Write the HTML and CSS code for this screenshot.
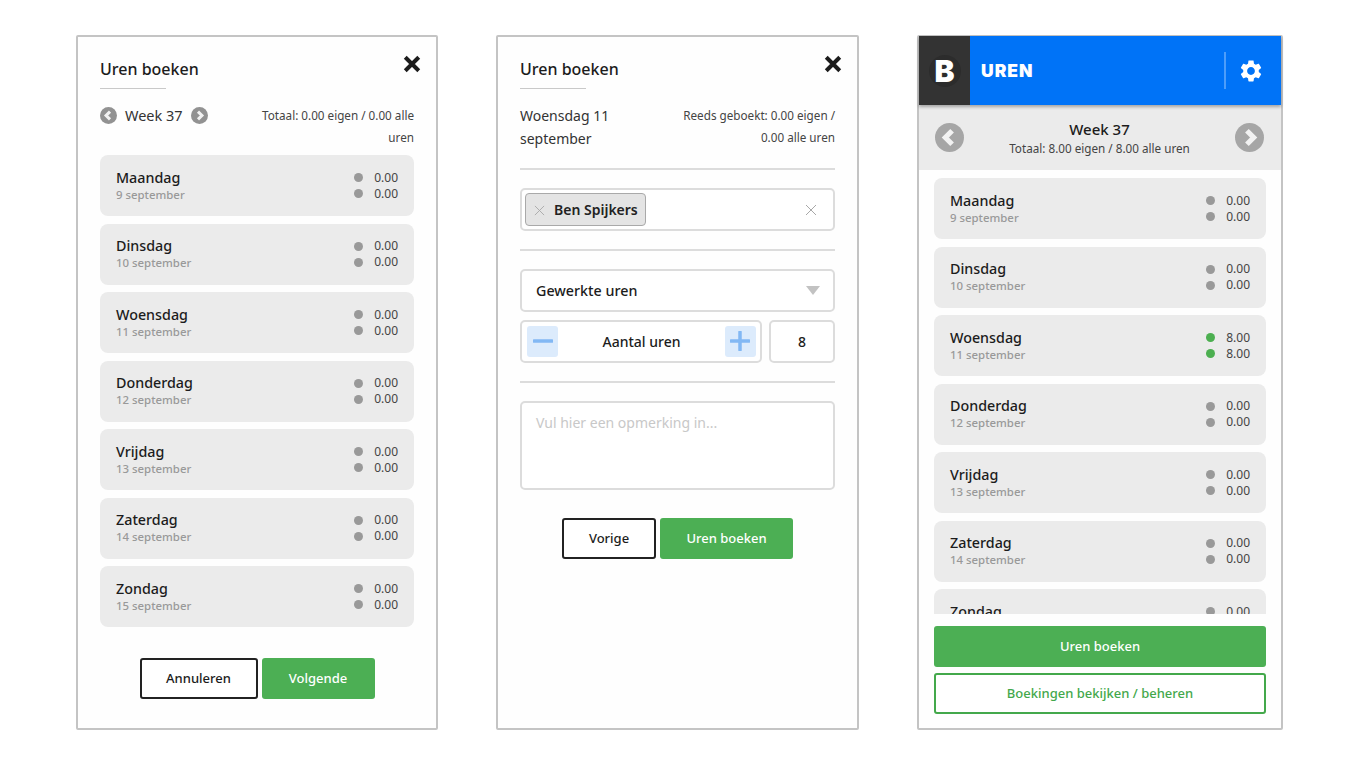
FILE: index.html
```html
<!DOCTYPE html>
<html lang="nl">
<head>
    <meta charset="UTF-8">
    <meta name="viewport" content="width=device-width, initial-scale=1.0">
    <title>Uren boeken</title>
    <link rel="stylesheet" href="styles.css">
</head>
<body>
    <svg class="defs" width="0" height="0">
        <symbol id="prev" viewBox="0 0 28 28"><circle cx="14" cy="14" r="14" fill="currentColor"/><path d="M16.5 7.5 10 14l6.5 6.5" fill="none" stroke="#f2f2f2" stroke-width="5"/></symbol>
        <symbol id="next" viewBox="0 0 28 28"><circle cx="14" cy="14" r="14" fill="currentColor"/><path d="M11.5 7.5 18 14l-6.5 6.5" fill="none" stroke="#f2f2f2" stroke-width="5"/></symbol>
        <symbol id="close" viewBox="0 0 16 16"><path d="M2 2l12 12M14 2 2 14" fill="none" stroke="#1c1c1c" stroke-width="3.6"/></symbol>
        <symbol id="thin-x" viewBox="0 0 12 12"><path d="M1 1l10 10M11 1 1 11" fill="none" stroke="#a8a8a8" stroke-width="1"/></symbol>
    </svg>

    <!-- scherm 1: week kiezen -->
    <section class="panel">
        <div class="panel-head">
            <h2>Uren boeken</h2>
            <svg class="close"><use href="#close"/></svg>
        </div>
        <div class="week-row">
            <div class="week-nav">
                <svg class="arrow-small"><use href="#prev"/></svg>
                <span>Week 37</span>
                <svg class="arrow-small"><use href="#next"/></svg>
            </div>
            <p class="totals">Totaal: 0.00 eigen / 0.00 alle uren</p>
        </div>
        <div class="days">
            <div class="day"><div class="day-text"><div class="day-name">Maandag</div><div class="day-date">9 september</div></div><div class="hours"><div><i class="dot"></i>0.00</div><div><i class="dot"></i>0.00</div></div></div>
            <div class="day"><div class="day-text"><div class="day-name">Dinsdag</div><div class="day-date">10 september</div></div><div class="hours"><div><i class="dot"></i>0.00</div><div><i class="dot"></i>0.00</div></div></div>
            <div class="day"><div class="day-text"><div class="day-name">Woensdag</div><div class="day-date">11 september</div></div><div class="hours"><div><i class="dot"></i>0.00</div><div><i class="dot"></i>0.00</div></div></div>
            <div class="day"><div class="day-text"><div class="day-name">Donderdag</div><div class="day-date">12 september</div></div><div class="hours"><div><i class="dot"></i>0.00</div><div><i class="dot"></i>0.00</div></div></div>
            <div class="day"><div class="day-text"><div class="day-name">Vrijdag</div><div class="day-date">13 september</div></div><div class="hours"><div><i class="dot"></i>0.00</div><div><i class="dot"></i>0.00</div></div></div>
            <div class="day"><div class="day-text"><div class="day-name">Zaterdag</div><div class="day-date">14 september</div></div><div class="hours"><div><i class="dot"></i>0.00</div><div><i class="dot"></i>0.00</div></div></div>
            <div class="day"><div class="day-text"><div class="day-name">Zondag</div><div class="day-date">15 september</div></div><div class="hours"><div><i class="dot"></i>0.00</div><div><i class="dot"></i>0.00</div></div></div>
        </div>
        <div class="actions actions-first">
            <button class="btn btn-outline btn-cancel">Annuleren</button>
            <button class="btn btn-green btn-next">Volgende</button>
        </div>
    </section>

    <!-- scherm 2: uren invullen -->
    <section class="panel panel-form">
        <div class="panel-head">
            <h2>Uren boeken</h2>
            <svg class="close"><use href="#close"/></svg>
        </div>
        <div class="date-row">
            <p class="date-title">Woensdag 11 september</p>
            <p class="totals">Reeds geboekt: 0.00 eigen / 0.00 alle uren</p>
        </div>
        <hr>
        <div class="field tag-field">
            <div class="tag"><svg class="thin-x"><use href="#thin-x"/></svg>Ben Spijkers</div>
            <svg class="thin-x clear"><use href="#thin-x"/></svg>
        </div>
        <hr>
        <div class="field select-field">
            <span>Gewerkte uren</span>
            <i class="caret"></i>
        </div>
        <div class="stepper-row">
            <div class="field stepper">
                <div class="step"><svg width="20" height="20" viewBox="0 0 20 20"><path d="M1 10h18" stroke="#82b8f4" stroke-width="3.5" stroke-linecap="round"/></svg></div>
                <span>Aantal uren</span>
                <div class="step"><svg width="20" height="20" viewBox="0 0 20 20"><path d="M1 10h18M10 1v18" stroke="#82b8f4" stroke-width="3.5" stroke-linecap="round"/></svg></div>
            </div>
            <div class="field amount">8</div>
        </div>
        <hr>
        <div class="field remark">Vul hier een opmerking in...</div>
        <div class="actions actions-form">
            <button class="btn btn-outline btn-back">Vorige</button>
            <button class="btn btn-green btn-book">Uren boeken</button>
        </div>
    </section>

    <!-- scherm 3: weekoverzicht in de app -->
    <section class="panel panel-app">
        <header class="app-bar">
            <div class="logo"><span>B</span></div>
            <div class="app-title">UREN</div>
            <div class="settings">
                <svg width="26" height="26" viewBox="0 0 24 24"><path fill="#fff" d="M19.14 12.94c.04-.3.06-.61.06-.94 0-.32-.02-.64-.07-.94l2.03-1.58c.18-.14.23-.41.12-.61l-1.92-3.32c-.12-.22-.37-.29-.59-.22l-2.39.96c-.5-.38-1.03-.7-1.62-.94l-.36-2.54c-.04-.24-.24-.41-.48-.41h-3.84c-.24 0-.43.17-.47.41l-.36 2.54c-.59.24-1.13.57-1.62.94l-2.39-.96c-.22-.08-.47 0-.59.22L2.74 8.87c-.12.21-.08.47.12.61l2.03 1.58c-.05.3-.09.63-.09.94s.02.64.07.94l-2.03 1.58c-.18.14-.23.41-.12.61l1.92 3.32c.12.22.37.29.59.22l2.39-.96c.5.38 1.03.7 1.62.94l.36 2.54c.05.24.24.41.48.41h3.84c.24 0 .44-.17.47-.41l.36-2.54c.59-.24 1.13-.56 1.62-.94l2.39.96c.22.08.47 0 .59-.22l1.92-3.32c.12-.22.07-.47-.12-.61l-2.01-1.58zM12 15.6c-1.98 0-3.6-1.62-3.6-3.6s1.62-3.6 3.6-3.6 3.6 1.62 3.6 3.6-1.62 3.6-3.6 3.6z"/></svg>
            </div>
        </header>
        <div class="week-bar">
            <svg class="arrow-big"><use href="#prev"/></svg>
            <div class="week-info">
                <div class="week-label">Week 37</div>
                <div class="week-total">Totaal: 8.00 eigen / 8.00 alle uren</div>
            </div>
            <svg class="arrow-big"><use href="#next"/></svg>
        </div>
        <div class="days days-app">
            <div class="day"><div class="day-text"><div class="day-name">Maandag</div><div class="day-date">9 september</div></div><div class="hours"><div><i class="dot"></i>0.00</div><div><i class="dot"></i>0.00</div></div></div>
            <div class="day"><div class="day-text"><div class="day-name">Dinsdag</div><div class="day-date">10 september</div></div><div class="hours"><div><i class="dot"></i>0.00</div><div><i class="dot"></i>0.00</div></div></div>
            <div class="day"><div class="day-text"><div class="day-name">Woensdag</div><div class="day-date">11 september</div></div><div class="hours"><div><i class="dot dot-green"></i>8.00</div><div><i class="dot dot-green"></i>8.00</div></div></div>
            <div class="day"><div class="day-text"><div class="day-name">Donderdag</div><div class="day-date">12 september</div></div><div class="hours"><div><i class="dot"></i>0.00</div><div><i class="dot"></i>0.00</div></div></div>
            <div class="day"><div class="day-text"><div class="day-name">Vrijdag</div><div class="day-date">13 september</div></div><div class="hours"><div><i class="dot"></i>0.00</div><div><i class="dot"></i>0.00</div></div></div>
            <div class="day"><div class="day-text"><div class="day-name">Zaterdag</div><div class="day-date">14 september</div></div><div class="hours"><div><i class="dot"></i>0.00</div><div><i class="dot"></i>0.00</div></div></div>
            <div class="day"><div class="day-text"><div class="day-name">Zondag</div><div class="day-date">15 september</div></div><div class="hours"><div><i class="dot"></i>0.00</div><div><i class="dot"></i>0.00</div></div></div>
        </div>
        <div class="app-actions">
            <button class="btn btn-green">Uren boeken</button>
            <button class="btn btn-outline-green">Boekingen bekijken / beheren</button>
        </div>
    </section>
</body>
</html>
```

FILE: styles.css
```css
* {
    box-sizing: border-box;
}
body {
    margin: 0;
    padding: 35px 0 0 76px;
    display: flex;
    align-items: flex-start;
    gap: 58px;
    font-family: "Noto Sans", sans-serif;
    background-color: #ffffff;
    color: #1c1c1c;
}
p {
    margin: 0;
}
.defs {
    position: absolute;
}
.panel {
    width: 362px;
    height: 695px;
    border: 2px solid #c4c4c4;
    border-radius: 2px;
    padding: 0 22px;
    background-color: #fefefe;
    flex-shrink: 0;
}
.panel-head {
    height: 52px;
    padding-top: 20px;
    display: flex;
    justify-content: space-between;
    position: relative;
}
.panel-head::after {
    content: "";
    position: absolute;
    left: 0;
    bottom: 0;
    width: 66px;
    height: 1px;
    background-color: #c9c9c9;
}
h2 {
    margin: 0;
    font-size: 16px;
    line-height: 24px;
    font-weight: 500;
}
.close {
    width: 18px;
    height: 18px;
    margin: -2px -7px 0 0;
}
.week-row {
    height: 66px;
    padding-top: 15px;
    display: flex;
    justify-content: space-between;
}
.week-nav {
    display: flex;
    align-items: center;
    height: 22px;
    gap: 8px;
    font-size: 14.5px;
    color: #333;
    white-space: nowrap;
}
.arrow-small {
    width: 17px;
    height: 17px;
    color: #929292;
}
.totals {
    width: 165px;
    text-align: right;
    font-size: 11.7px;
    line-height: 22px;
    color: #444;
}
.days {
    display: flex;
    flex-direction: column;
    gap: 7.5px;
}
.day {
    height: 61px;
    flex-shrink: 0;
    padding: 0 16px;
    background-color: #ebebeb;
    border-radius: 8px;
    display: flex;
    justify-content: space-between;
    align-items: center;
}
.day-text {
    margin-top: -1px;
}
.day-name {
    font-size: 14.3px;
    line-height: 18px;
    font-weight: 500;
    color: #1c1c1c;
}
.day-date {
    font-size: 11.4px;
    line-height: 15px;
    font-weight: 500;
    color: #999;
}
.hours {
    font-size: 12px;
    line-height: 16px;
    color: #444;
}
.hours div {
    display: flex;
    align-items: center;
}
.dot {
    width: 9px;
    height: 9px;
    margin-right: 11px;
    border-radius: 50%;
    background-color: #999;
}
.dot-green {
    background-color: #4caf50;
}
.actions {
    display: flex;
    justify-content: center;
    gap: 4px;
}
.actions-first {
    margin-top: 31px;
}
.btn {
    height: 41px;
    border-radius: 3px;
    font-family: inherit;
    font-size: 13px;
    font-weight: 500;
    padding: 0 0 2px;
}
.btn-outline {
    background-color: #fff;
    color: #1c1c1c;
    border: 2px solid #222;
}
.btn-green {
    background-color: #4caf54;
    color: #fff;
    border: none;
}
.btn-outline-green {
    background-color: #fff;
    color: #43a84b;
    border: 2px solid #43a84b;
}
.btn-cancel {
    width: 118px;
}
.btn-next {
    width: 113px;
}
.btn-back {
    width: 94px;
}
.btn-book {
    width: 133px;
}

/* formulier */
.panel-form {
    width: 363px;
}
.date-row {
    height: 79px;
    padding-top: 15px;
    display: flex;
    justify-content: space-between;
}
.date-title {
    width: 120px;
    font-size: 14px;
    line-height: 23px;
    color: #333;
}
.date-row .totals {
    width: 160px;
}
hr {
    margin: 0;
    border: none;
    height: 2px;
    background-color: #dcdcdc;
}
.field {
    border: 2px solid #dcdcdc;
    border-radius: 5px;
    background-color: #fff;
    font-size: 14px;
    font-weight: 500;
}
.tag-field {
    height: 43px;
    margin: 18px 0;
    padding: 3px 16px 0 3px;
    display: flex;
    justify-content: space-between;
    align-items: flex-start;
}
.tag {
    width: 121px;
    height: 33px;
    background-color: #e4e4e4;
    border: 1px solid #a9a9a9;
    border-radius: 4px;
    display: flex;
    align-items: center;
    gap: 9px;
    padding-left: 8px;
    font-size: 14px;
    font-weight: 600;
    color: #222;
}
.thin-x {
    width: 11px;
    height: 11px;
    margin-top: 2px;
}
.clear {
    margin-top: 11px;
    width: 12px;
    height: 12px;
}
.select-field {
    height: 43px;
    margin-top: 18px;
    padding: 0 13px 0 14px;
    font-size: 14.3px;
    display: flex;
    justify-content: space-between;
    align-items: center;
}
.caret {
    width: 0;
    height: 0;
    border-left: 7px solid transparent;
    border-right: 7px solid transparent;
    border-top: 9px solid #c2c2c2;
}
.stepper-row {
    margin: 8px 0 18px;
    display: flex;
    gap: 7px;
}
.stepper {
    flex: 1;
    height: 43px;
    padding: 0 4px 1px 5px;
    display: flex;
    justify-content: space-between;
    align-items: center;
}
.step {
    width: 31px;
    height: 31px;
    border-radius: 3px;
    background-color: #dcebfc;
    display: flex;
    justify-content: center;
    align-items: center;
}
.amount {
    width: 66px;
    height: 43px;
    padding-bottom: 1px;
    display: flex;
    justify-content: center;
    align-items: center;
}
.remark {
    height: 89px;
    margin-top: 18px;
    padding: 10px 14px;
    font-size: 14px;
    font-weight: 400;
    color: #c8c8c8;
}
.actions-form {
    margin-top: 28px;
}

/* app */
.panel-app {
    width: 366px;
    padding: 0;
}
.app-bar {
    height: 69px;
    margin-top: -1px;
    background-color: #0073f7;
    display: flex;
    align-items: center;
    box-shadow: 0 2px 3px rgba(0, 0, 0, 0.3);
    position: relative;
}
.logo {
    width: 51px;
    height: 69px;
    background-color: #333;
    display: flex;
    justify-content: center;
    align-items: center;
}
.logo span {
    width: 32px;
    height: 32px;
    border-radius: 50%;
    background-color: #2c2c2c;
    color: #fff;
    font-family: Inter, sans-serif;
    font-size: 30px;
    font-weight: 900;
    line-height: 32px;
    text-align: center;
}
.app-title {
    flex: 1;
    margin-left: 11px;
    font-family: Inter, sans-serif;
    font-size: 17.5px;
    font-weight: 900;
    letter-spacing: 1px;
    color: #fff;
}
.settings {
    width: 57px;
    height: 37px;
    padding-right: 5px;
    border-left: 2px solid #4d9dfa;
    display: flex;
    justify-content: center;
    align-items: center;
}
.week-bar {
    height: 65px;
    background-color: #ebebeb;
    padding: 0 17px 0 16px;
    display: flex;
    justify-content: space-between;
    align-items: center;
}
.arrow-big {
    width: 29px;
    height: 29px;
    color: #a6a6a6;
}
.week-info {
    text-align: center;
}
.week-label {
    font-size: 15px;
    line-height: 21px;
    font-weight: 500;
}
.week-total {
    font-size: 11.7px;
    line-height: 17px;
    color: #444;
}
.days-app {
    height: 436px;
    margin: 8px 15px 0;
    overflow: hidden;
}
.app-actions {
    margin: 12px 15px 0;
    display: flex;
    flex-direction: column;
    gap: 6px;
}
```
